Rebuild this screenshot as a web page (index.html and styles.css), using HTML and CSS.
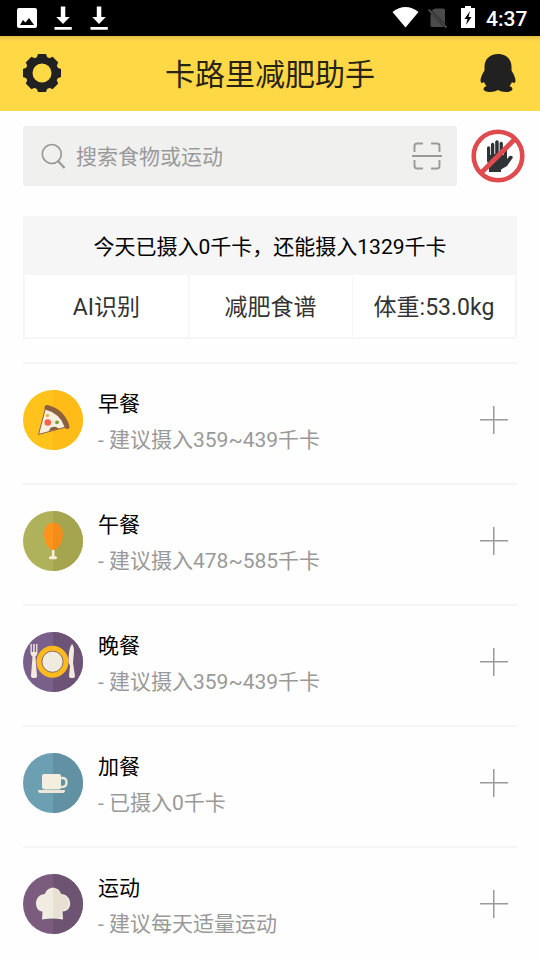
FILE: index.html
```html
<!DOCTYPE html>
<html lang="zh-CN">
<head>
<meta charset="utf-8">
<title>卡路里减肥助手</title>
<link rel="stylesheet" href="styles.css">
</head>
<body>
<div class="status">
  <svg class="status-left" width="96" height="36" viewBox="16 0 96 36" fill="#fff">
    <path fill-rule="evenodd" d="M19 8h16q2 0 2 2v16q0 2-2 2H19q-2 0-2-2V10q0-2 2-2zM20 25h14l-5-7-3.500 4.500-2.500-2.500z"/>
    <path id="down" d="M60.800 6.500h4.500v10.500h4.500L63 24l-6.800-7h4.600zM54.500 27h17.300v2.700H54.500z"/>
    <use href="#down" x="36"/>
  </svg>
  <svg class="status-right" width="90" height="36" viewBox="390 0 90 36">
    <path fill="#fff" d="M392.500 12q13-10 26 0l-13 15.500z"/>
    <path fill="#4b4b4b" d="M435 8.500h8q2 0 2 2V24L431.500 10.500zM430.500 13L444 27h-12q-1.500 0-1.500-2z"/>
    <path d="M428.500 9.500l18 18" stroke="#4b4b4b" stroke-width="1.800"/>
    <path fill="#fff" d="M461 8h4V6h6v2h4v20h-14z"/>
    <path d="M470 11l-5.500 8h3l-1.500 6 5.500-8h-3z"/>
  </svg>
  <span class="clock">4:37</span>
</div>
<header class="header">
  <svg width="38" height="38" viewBox="-19 -19 38 38" fill="#212121">
    <circle r="13" fill="none" stroke="#212121" stroke-width="7"/>
    <g id="teeth"><path id="tooth" d="M-5.500-15l1.500-4h8l1.500 4z"/><use href="#tooth" transform="rotate(90)"/><use href="#tooth" transform="rotate(180)"/><use href="#tooth" transform="rotate(270)"/></g>
    <use href="#teeth" transform="rotate(45)"/>
  </svg>
  <h1>卡路里减肥助手</h1>
  <svg width="36" height="38" viewBox="0 0 36 38" fill="#212121">
    <path d="M18 0C9.500 0 4.500 5.500 4.500 13v3.500C2 20 .5 24 .5 27q.5 3.500 3.500 1 1 2.500 2.500 4-3 1-3 3c0 3.500 10 4 14.500 1 4.500 3 14.500 2.500 14.500-1q0-2-3-3 1.500-1.500 2.500-4 3 2.500 3.500-1 0-4-4-10.500V13C31.500 5.500 26.500 0 18 0z"/>
  </svg>
</header>
<main>
  <div class="search-row">
    <div class="search">
      <svg class="lens" width="25" height="26" viewBox="0 0 25 26" fill="none" stroke="#999" stroke-width="1.700"><circle cx="10.800" cy="11" r="9.500"/><path d="M17 18l6.500 7" stroke-width="2.300"/></svg>
      <span>搜索食物或运动</span>
      <svg class="scan" width="30" height="28" viewBox="0 0 30 28" fill="none" stroke="#999" stroke-width="1.900"><path d="M2.500 10V4q0-2.500 2.500-2.500h6M19 1.500h6q2.500 0 2.500 2.500v6M2.500 18v6q0 2.500 2.500 2.500h6M19 26.500h6q2.500 0 2.500-2.500v-6M0 14h30"/></svg>
    </div>
    <svg class="stop" width="54" height="54" viewBox="0 0 54 54">
      <path fill="#303336" d="M18 43v-6l-2-5V18.500q1.500-2.500 3.200 0V26h.8V15q1.600-2.500 3.300 0v10h.9V12.500q1.800-2.500 3.500 0V25h.9V14q1.600-2.500 3.300 0v12h.9v-7q1.600-2.500 3.200 0v11l2.500-3q2.500-1 3.500 1.500l-6 8.500-6 3.500v2.500z"/>
      <circle cx="27" cy="27" r="24.300" fill="none" stroke="#df4a4e" stroke-width="4.600"/>
      <path d="M10 44L44 10" stroke="#df4a4e" stroke-width="4.800"/>
    </svg>
  </div>
  <section class="summary">
    <p>今天已摄入0千卡，还能摄入1329千卡</p>
    <div class="tabs"><div>AI识别</div><div>减肥食谱</div><div>体重:53.0kg</div></div>
  </section>
  <div class="meals">
    <div class="meal">
      <svg class="badge" viewBox="0 0 60 60"><circle cx="30" cy="30" r="30" fill="#ffc31b"/><path d="M30 0a30 30 0 0 1 0 60z" fill="#ffbc18"/>
        <path d="M22.500 18L15.500 44.500 43 37Q37 23 22.500 18z" fill="#f7eee0" stroke="#8d613d" stroke-width="1"/>
        <path d="M24 17.500Q39 21 44 36.500" fill="none" stroke="#8d613d" stroke-width="5" stroke-linecap="round"/>
        <path d="M26 41q1-4 4-4 3-1 6 2z" fill="#8d613d"/><circle cx="24.800" cy="32.500" r="3.300" fill="#f06449"/><circle cx="34" cy="32.300" r="1.900" fill="#72a52e"/><circle cx="24.500" cy="25.500" r="1.600" fill="#e7ad35"/></svg>
      <div class="text"><h2>早餐</h2><p>- 建议摄入359~439千卡</p></div><i class="plus"></i>
    </div>
    <div class="meal">
      <svg class="badge" viewBox="0 0 60 60"><circle cx="30" cy="30" r="30" fill="#b0b15b"/><path d="M30 0a30 30 0 0 1 0 60z" fill="#a5a44f"/>
        <path d="M29 37h2.500v8q2.500 0 2.500 1.800t-2 1.400h-4q-2.500 0-2-1.700t3-1.500z" fill="#f7eee0"/><path d="M30 11.700C24 11.700 21 17 21 23c0 9 5 16 9.500 16S39.500 32 39.500 23c0-6-3.500-11.300-9.500-11.300z" fill="#ff941b"/><path d="M30 11.700c6 0 9.500 5.300 9.500 11.300 0 9-5 16-9.500 16z" fill="#f58b19"/></svg>
      <div class="text"><h2>午餐</h2><p>- 建议摄入478~585千卡</p></div><i class="plus"></i>
    </div>
    <div class="meal">
      <svg class="badge" viewBox="0 0 60 60"><circle cx="30" cy="30" r="30" fill="#79608a"/><path d="M30 0a30 30 0 0 1 0 60z" fill="#6d5477"/>
        <circle cx="29.500" cy="29.700" r="16" fill="#ffba20"/><circle cx="29.500" cy="29.700" r="10.600" fill="#efecdf" stroke="#6b4b45" stroke-width=".8"/>
        <path d="M7.500 12h1.300v8h1.400v-8h1.500v8h1.400v-8h1.300v9q0 2-2 3.500L14 44q0 2-3 2t-3-2l1.500-19.500Q7.500 23 7.500 21z" fill="#f4e9df"/><path d="M49 12q-3.500 4-3.500 18l1.500 4-1 10q0 2 3 2t3-2l-2-13 1-12q0-5-2-7z" fill="#f4e9df"/></svg>
      <div class="text"><h2>晚餐</h2><p>- 建议摄入359~439千卡</p></div><i class="plus"></i>
    </div>
    <div class="meal">
      <svg class="badge" viewBox="0 0 60 60"><circle cx="30" cy="30" r="30" fill="#6d9fb2"/><path d="M30 0a30 30 0 0 1 0 60z" fill="#6391a4"/>
        <path d="M21 21h15q2 0 2 2v11q0 2.500-2 2.500H22q-3 0-3-3V23q0-2 2-2z" fill="#f4eedf"/><path d="M37 25h2.500q4 0 4 4.500T39 34h-2" fill="none" stroke="#eee7d7" stroke-width="2.400"/><path d="M15 37h27q0 3-2 3H17q-2 0-2-3z" fill="#eee7d7"/></svg>
      <div class="text"><h2>加餐</h2><p>- 已摄入0千卡</p></div><i class="plus"></i>
    </div>
    <div class="meal">
      <svg class="badge" viewBox="0 0 60 60"><circle cx="30" cy="30" r="30" fill="#7c5c7e"/><path d="M30 0a30 30 0 0 1 0 60z" fill="#6e5473"/>
        <path d="M19 45.500l.5-8C15 37.500 13 33 13 29.500 13 24 17 20 22 20c1-4 4.500-6.200 8-6.200s7 2.200 8 6.200c5 0 9.200 4 9.200 9.500 0 4-2.500 8-7.700 8l.5 8q-10-2-21 0z" fill="#f1ece1"/><path d="M30 14.500c3.500 0 6.500 2.500 7.500 6.500 5 0 8 4 8 8.500 0 4-2.500 7-7.500 7l-.5 7.500-7.500-.5z" fill="#e7e0d3"/></svg>
      <div class="text"><h2>运动</h2><p>- 建议每天适量运动</p></div><i class="plus"></i>
    </div>
  </div>
</main>
</body>
</html>
```
FILE: styles.css
```css
* { box-sizing: border-box; }
body {
  margin: 0;
  width: 540px;
  height: 960px;
  overflow: hidden;
  background: #fefefe;
  font-family: Roboto, "Noto Sans CJK SC", sans-serif;
}
svg { display: block; flex: none; }
h1, h2, p { margin: 0; font-weight: 400; }
.status {
  height: 36px;
  background: #000;
  display: flex;
  align-items: center;
  padding: 0 12px 0 16px;
}
.status-right { margin-left: auto; }
.clock {
  width: 42px;
  margin-left: 6px;
  padding-top: 1px;
  color: #fff;
  font-size: 21px;
  font-weight: 500;
  white-space: nowrap;
}
.header {
  height: 75px;
  padding: 0 24px 2px 23px;
  display: flex;
  align-items: center;
  justify-content: space-between;
  background: linear-gradient(#dfbd46, #fbd548 4px, #ffd845 8px);
}
.header h1 { font-size: 30px; line-height: 40px; color: #272415; padding: 4px 1px 0 0; }
main { padding: 15px 23px 0; }
.search-row { display: flex; height: 60px; align-items: center; gap: 14px; margin-right: -9px; }
.search {
  width: 434px;
  height: 60px;
  padding: 0 15px 0 18px;
  display: flex;
  align-items: center;
  gap: 10px;
  background: #f0f0ef;
  border-radius: 2px;
  color: #999;
  font-size: 21px;
}
.search span { padding-bottom: 2px; }
.lens { margin-bottom: 1px; }
.scan { margin-left: auto; }
.stop { margin-bottom: 1px; }
.summary { margin-top: 30px; height: 123px; background: #f6f6f6; border-radius: 2px; }
.summary p { height: 59px; line-height: 62px; text-align: center; font-size: 21px; color: #000; }
.tabs { height: 64px; padding: 0 2px 2px; display: grid; grid-template-columns: 163px 162px 162px; column-gap: 1.5px; }
.tabs div { background: #fff; text-align: center; font-size: 23px; line-height: 65px; height: 62px; color: #333; }
.meals { margin-top: 23px; }
.meal {
  height: 121px;
  border-top: 2px solid #f5f5f5;
  display: flex;
  align-items: flex-start;
  padding: 26px 9px 0 0;
}
.badge { width: 60px; height: 60px; }
.text { margin-left: 15px; }
.text h2 { font-size: 21px; line-height: 30px; color: #000; margin-top: -1px; }
.text p { font-size: 21px; line-height: 30px; color: #999; margin-top: 6px; }
.plus {
  width: 28px;
  height: 28px;
  margin: 16px 0 0 auto;
  background: linear-gradient(#999, #999) center / 28px 1.5px no-repeat, linear-gradient(#999, #999) center / 1.5px 28px no-repeat;
}
```
